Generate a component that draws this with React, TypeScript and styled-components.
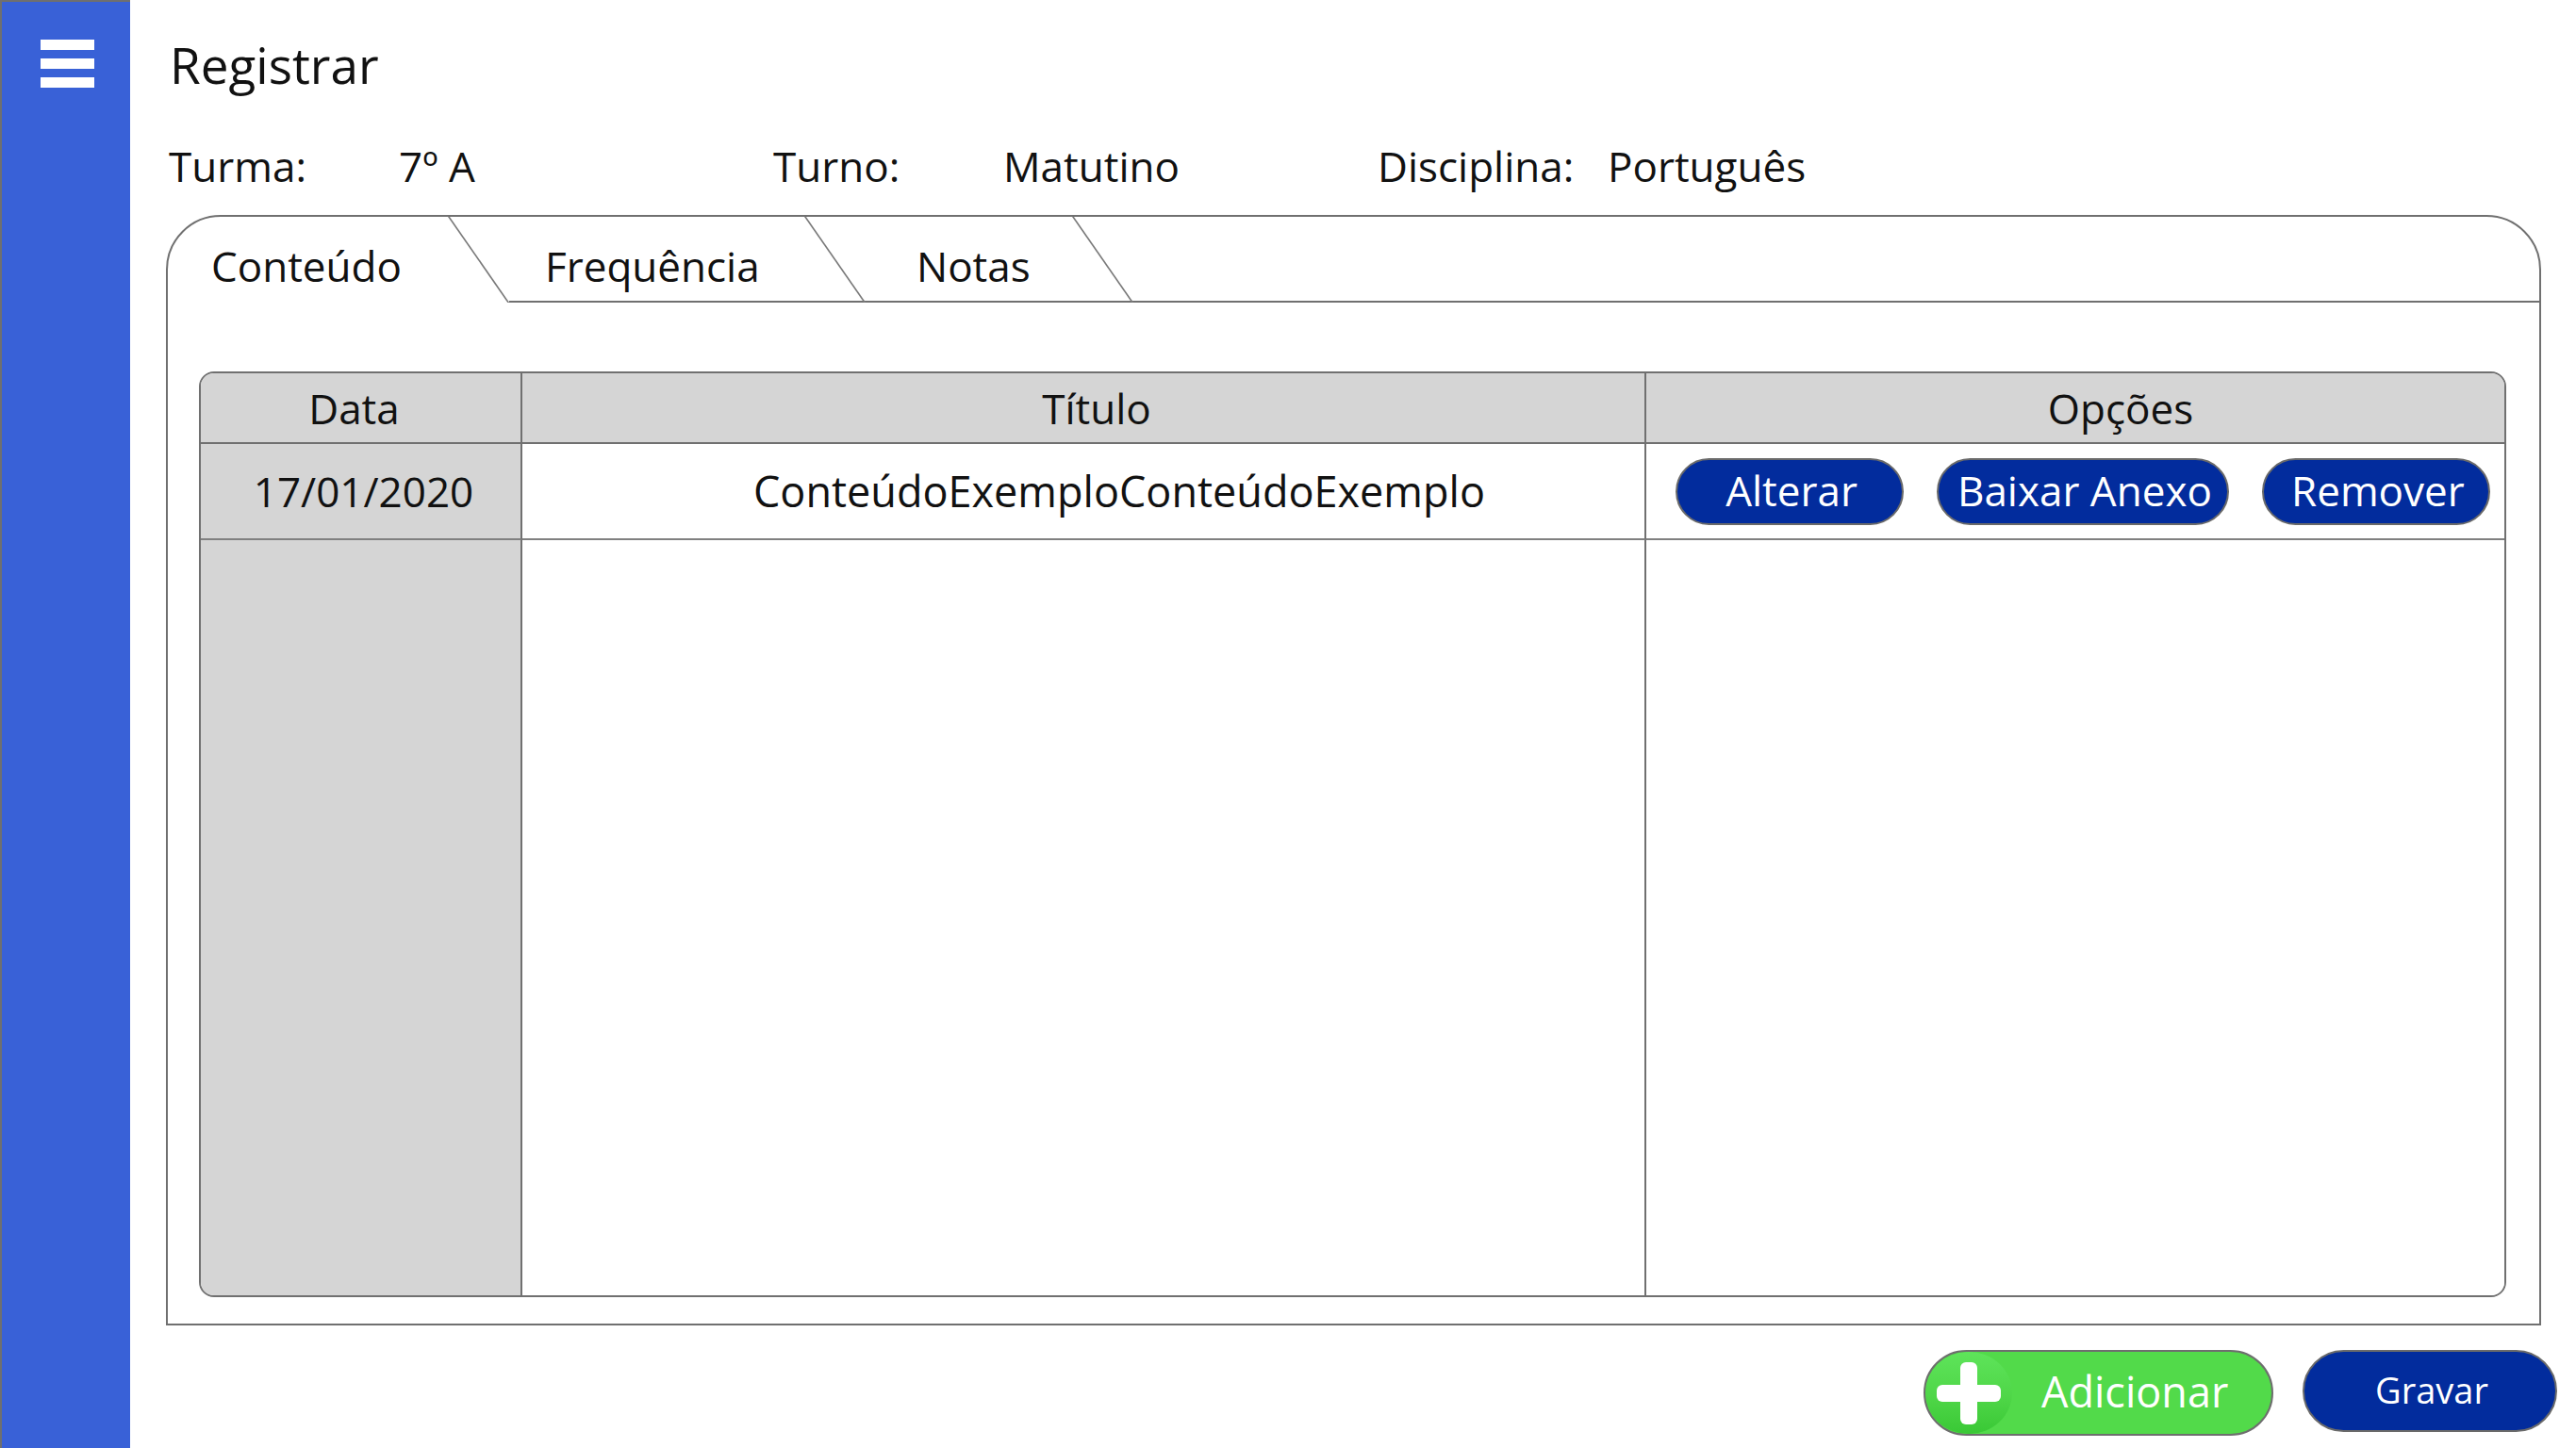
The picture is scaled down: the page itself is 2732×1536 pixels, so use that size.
import React from 'react'
import styled, { createGlobalStyle } from 'styled-components'

const GlobalStyle = createGlobalStyle`
    html, body {
        margin: 0;
        padding: 0;
        background: #ffffff;
    }
    body {
        font-family: "Open Sans", "Noto Sans", sans-serif;
        color: #111111;
    }
`

const Page = styled.div`
    display: flex;
    width: 2732px;
    height: 1536px;
    overflow: hidden;
`

const Sidebar = styled.aside`
    flex: none;
    width: 138px;
    height: 100%;
    box-sizing: border-box;
    background: #3961d7;
    border-left: 2px solid #6f6f6f;
    border-top: 2px solid #6f6f6f;
    padding: 40px 0 0 41px;
`

const Main = styled.main`
    flex: 1;
    display: flex;
    flex-direction: column;
    padding: 33px 20px 0 38px;
    min-width: 0;
`

const Title = styled.h1`
    margin: 0 0 0 4px;
    font-size: 53px;
    line-height: 72px;
    font-weight: 400;
`

const InfoRow = styled.div`
    display: flex;
    margin: 41px 0 0 3px;
    font-size: 44px;
    line-height: 60px;
`

const InfoGroup = styled.div`
    display: flex;
    width: 641px;
`

const InfoLabel = styled.span`
    width: 244px;
`

const Panel = styled.section`
    display: flex;
    flex-direction: column;
    height: 1178px;
    box-sizing: border-box;
    margin: 22px 17px 0 0;
    border: 2px solid #707070;
    border-radius: 58px 58px 0 0;
`

const TabBar = styled.div`
    display: flex;
    height: 91px;
    flex: none;
`

const Tab = styled.div<{ $width: number; $inset: number; $active?: boolean }>`
    position: relative;
    flex: none;
    width: ${p => p.$width}px;
    box-sizing: border-box;
    padding: 22px 0 0 ${p => p.$inset}px;
    font-size: 44px;
    line-height: 60px;
    border-bottom: 2px solid ${p => (p.$active ? 'transparent' : '#707070')};

    &::after {
        content: '';
        position: absolute;
        top: 0;
        bottom: -2px;
        left: calc(100% - 65px);
        width: 2px;
        background: #7a7a7a;
        transform: skewX(34.8deg);
        transform-origin: top left;
    }
`

const TabFiller = styled.div`
    flex: 1;
    border-bottom: 2px solid #707070;
`

const Table = styled.div`
    flex: 1;
    display: grid;
    grid-template-columns: 341px 1192px 1fr;
    grid-template-rows: 75px 102px 1fr;
    margin: 73px 35px 28px 33px;
    border: 2px solid #707070;
    border-radius: 16px;
    overflow: hidden;
`

// $shift moves the centred text: positive to the right, negative to the left
const HeadCell = styled.div<{ $shift?: number; $last?: boolean }>`
    display: flex;
    align-items: center;
    justify-content: center;
    padding-left: ${p => Math.max(p.$shift ?? 0, 0)}px;
    padding-right: ${p => Math.max(-(p.$shift ?? 0), 0)}px;
    background: #d5d5d5;
    font-size: 44px;
    line-height: 60px;
    border-bottom: 2px solid #707070;
    border-right: ${p => (p.$last ? 'none' : '2px solid #707070')};
`

const Cell = styled.div<{ $gray?: boolean; $shift?: number; $last?: boolean; $line?: boolean }>`
    display: flex;
    align-items: center;
    justify-content: center;
    padding-left: ${p => p.$shift ?? 0}px;
    background: ${p => (p.$gray ? '#d5d5d5' : '#ffffff')};
    font-size: 44px;
    line-height: 60px;
    border-right: ${p => (p.$last ? 'none' : '2px solid #707070')};
    border-bottom: ${p => (p.$line ? '2px solid #808080' : 'none')};
`

const TitleText = styled.span`
    font-size: 45px;
`

const ActionCell = styled(Cell)`
    justify-content: flex-start;
    gap: 35px;
    padding-left: 31px;
`

const PillButton = styled.button`
    min-width: 242px;
    height: 71px;
    padding: 0 16px 2px 20px;
    box-sizing: border-box;
    border: 2px solid #6a6a6a;
    border-radius: 36px;
    background: #022c9d;
    color: #ffffff;
    font-family: "Open Sans", "Noto Sans", sans-serif;
    font-size: 44px;
    line-height: 60px;
`

const Footer = styled.div`
    display: flex;
    justify-content: flex-end;
    align-items: flex-start;
    gap: 31px;
    margin-top: 26px;
`

const AddButton = styled.button`
    display: flex;
    align-items: center;
    width: 371px;
    height: 91px;
    padding: 0;
    box-sizing: border-box;
    border: 2px solid #6e6e6e;
    border-radius: 46px;
    background: #52da4a;
    color: #ffffff;
    font-family: "Open Sans", "Noto Sans", sans-serif;
    font-size: 45px;
    overflow: hidden;
`

const AddIcon = styled.span`
    flex: none;
    display: flex;
    align-items: center;
    justify-content: center;
    width: 92px;
    height: 100%;
    border-radius: 50%;
    background: linear-gradient(180deg, #5ee45a 0%, #4fd648 55%, #39c835 100%);
`

const AddLabel = styled.span`
    margin: 0 0 4px 31px;
`

const SaveButton = styled.button`
    width: 270px;
    height: 87px;
    box-sizing: border-box;
    border: 2px solid #6a6a6a;
    border-radius: 44px;
    background: #022c9d;
    color: #ffffff;
    font-family: "Open Sans", "Noto Sans", sans-serif;
    font-size: 38px;
    padding: 0 0 4px 4px;
`

const MenuIcon = () => (
    <svg width="58" height="52" viewBox="0 0 58 52">
        <rect x="0" y="0" width="57" height="11" fill="#ffffff" />
        <rect x="0" y="20" width="57" height="11" fill="#ffffff" />
        <rect x="0" y="40" width="57" height="11" fill="#ffffff" />
    </svg>
)

const PlusIcon = () => (
    <svg width="68" height="66" viewBox="0 0 68 66">
        <rect x="25" y="0" width="18" height="66" rx="6" fill="#ffffff" />
        <rect x="0" y="24" width="68" height="18" rx="6" fill="#ffffff" />
    </svg>
)

const App = () => {
    return (
        <>
            <GlobalStyle />
            <Page>
                <Sidebar>
                    <MenuIcon />
                </Sidebar>
                <Main>
                    <Title>Registrar</Title>
                    <InfoRow>
                        <InfoGroup>
                            <InfoLabel>Turma:</InfoLabel>
                            <span>7º A</span>
                        </InfoGroup>
                        <InfoGroup>
                            <InfoLabel>Turno:</InfoLabel>
                            <span>Matutino</span>
                        </InfoGroup>
                        <InfoGroup>
                            <InfoLabel>Disciplina:</InfoLabel>
                            <span>Português</span>
                        </InfoGroup>
                    </InfoRow>
                    <Panel>
                        <TabBar>
                            <Tab $width={362} $inset={46} $active>Conteúdo</Tab>
                            <Tab $width={378} $inset={38}>Frequência</Tab>
                            <Tab $width={284} $inset={54}>Notas</Tab>
                            <TabFiller />
                        </TabBar>
                        <Table>
                            <HeadCell $shift={-14}>Data</HeadCell>
                            <HeadCell $shift={28}>Título</HeadCell>
                            <HeadCell $shift={96} $last>Opções</HeadCell>

                            <Cell $gray $shift={6} $line>17/01/2020</Cell>
                            <Cell $shift={76} $line>
                                <TitleText>ConteúdoExemploConteúdoExemplo</TitleText>
                            </Cell>
                            <ActionCell $last $line>
                                <PillButton>Alterar</PillButton>
                                <PillButton>Baixar Anexo</PillButton>
                                <PillButton>Remover</PillButton>
                            </ActionCell>

                            <Cell $gray />
                            <Cell />
                            <Cell $last />
                        </Table>
                    </Panel>
                    <Footer>
                        <AddButton>
                            <AddIcon>
                                <PlusIcon />
                            </AddIcon>
                            <AddLabel>Adicionar</AddLabel>
                        </AddButton>
                        <SaveButton>Gravar</SaveButton>
                    </Footer>
                </Main>
            </Page>
        </>
    )
}

export default App
